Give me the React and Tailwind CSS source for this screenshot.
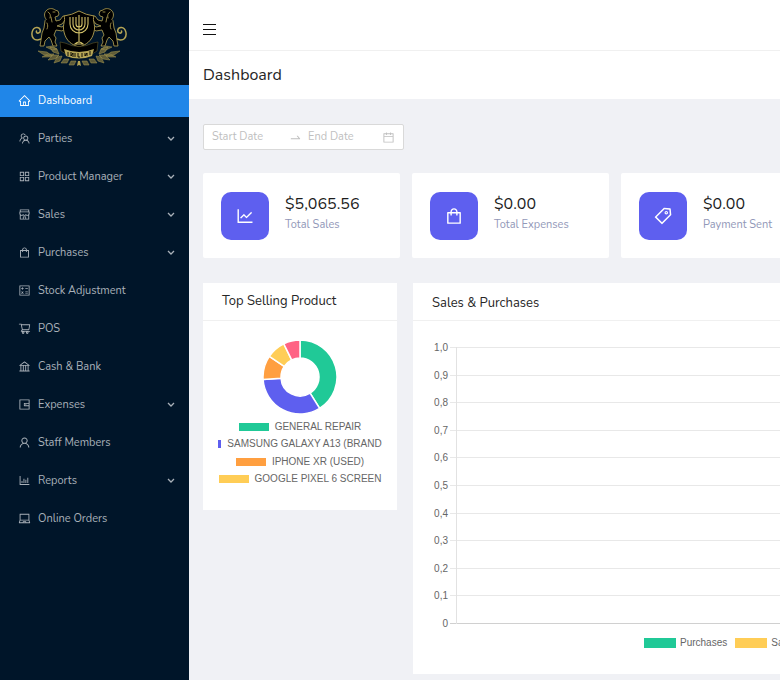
import {
  AiOutlineHome, AiOutlineTeam, AiOutlineAppstore, AiOutlineShop, AiOutlineShopping, AiOutlineCalculator,
  AiOutlineShoppingCart, AiOutlineBank, AiOutlineWallet, AiOutlineUser, AiOutlineBarChart, AiOutlineLaptop,
  AiOutlineLineChart, AiOutlineTag, AiOutlineCalendar, AiOutlineSwapRight,
} from "react-icons/ai";

const menu = [
  { label: "Dashboard", Icon: AiOutlineHome, active: true },
  { label: "Parties", Icon: AiOutlineTeam, sub: true },
  { label: "Product Manager", Icon: AiOutlineAppstore, sub: true },
  { label: "Sales", Icon: AiOutlineShop, sub: true },
  { label: "Purchases", Icon: AiOutlineShopping, sub: true },
  { label: "Stock Adjustment", Icon: AiOutlineCalculator },
  { label: "POS", Icon: AiOutlineShoppingCart },
  { label: "Cash & Bank", Icon: AiOutlineBank },
  { label: "Expenses", Icon: AiOutlineWallet, sub: true },
  { label: "Staff Members", Icon: AiOutlineUser },
  { label: "Reports", Icon: AiOutlineBarChart, sub: true },
  { label: "Online Orders", Icon: AiOutlineLaptop },
];

const stats = [
  { value: "$5,065.56", label: "Total Sales", Icon: AiOutlineLineChart },
  { value: "$0.00", label: "Total Expenses", Icon: AiOutlineShopping },
  { value: "$0.00", label: "Payment Sent", Icon: AiOutlineTag },
];

const slices = [
  { color: "#20c997", from: 0, to: 148 },
  { color: "#5e5fef", from: 148, to: 266 },
  { color: "#ff9f40", from: 266, to: 304 },
  { color: "#ffcd56", from: 304, to: 334 },
  { color: "#ff6384", from: 334, to: 360 },
];

const ticks = ["1,0", "0,9", "0,8", "0,7", "0,6", "0,5", "0,4", "0,3", "0,2", "0,1", "0"];

function Lion() {
  return (
    <g fill="#000" stroke="#b5a555" strokeWidth="0.8" strokeLinejoin="round" strokeLinecap="round">
      <path fill="none" strokeWidth="1.5" d="M13 29c-3 3-8 4-10.500 1.500C-.5 27 1 20 5.500 19.500c4-.4 5 4.500 2 5.500-1.500.5-2.500-.8-2-2" />
      <path d="M15 11c-2-2-2-6 0-8 2-3 7-3 9-1l3 1 1 3-1 2-3 1 1 4 4-1 3-4 3 0 0 3-4 5-5 2 5 1 4-3 1 3-5 4-6-1-2 5 2 3-1 4 2 4h-4l-2-6-2-3-4 4-1 5h-4l1-6 1-7 2-5 1-7z" />
      <path fill="none" d="M17 4c2 1 3 3 2 6M20 9l1 5M16 15c1 2 1 4 0 6M22 4h2" />
    </g>
  );
}

function Leaves() {
  return (
    <path
      fill="#7d733d"
      fillOpacity="0.75"
      stroke="#a99a50"
      strokeWidth="0.5"
      d="M7 43l9 1 5 4-8-1zM11 49l6-3 6 0-4 3zM19 39l7 2 2 5-6-2zM17 52l5-5 6 0-4 4zM23 55l3-6 5-1-2 5zM15 39l6-1 5 3-5 1zM30 55l3-4 5 0-2 4zM38 57l2-4 5 0-2 4z"
    />
  );
}

function Crest() {
  return (
    <svg className="h-[60px] w-24" viewBox="0 0 96 60" role="img" aria-label="Company crest">
      <Leaves />
      <g transform="matrix(-1 0 0 1 96 0)"><Leaves /></g>
      <Lion />
      <g transform="matrix(-1 0 0 1 96 0)"><Lion /></g>
      <path d="M33 8q8-1 15-5 7 4 15 5c-2 5 2 8 0 16-2 9-8 13-15 15-7-2-13-6-15-15-2-8 2-11 0-16z" fill="#000" stroke="#a3924a" />
      <g fill="none" stroke="#d3c26a" strokeWidth="1.1">
        <path d="M39 9v7a9 9 0 0 0 18 0V9M42 9v7a6 6 0 0 0 12 0V9M45 9v7a3 3 0 0 0 6 0V9M48 7v27M44 36q4-4 8 0z" />
      </g>
      <path d="M29 34l5 1q14 7 28 0l5-1-1 9-5 3q-13 5-26 0l-5-3z" fill="#000" stroke="#5f5729" strokeWidth="0.6" />
      <path d="M33 41q15 6 30 0l-2 7q-13 5-26 0z" fill="#b5a555" />
      <path d="M37 44v4M40 44v4l2-3v4M44 45v4M47 45v4h2M51 45v4M54 45v3l2-3v3M59 43v4" fill="none" stroke="#000" strokeWidth="0.9" />
      <path d="M46 58l1-5h2l1 5-2-1z" fill="#b5a555" />
    </svg>
  );
}

function Chevron() {
  return (
    <svg className="ml-auto size-2" viewBox="0 0 8 8" fill="none" stroke="currentColor" strokeWidth="1.3" aria-hidden="true">
      <path d="M1 2 4 5 7 2" />
    </svg>
  );
}

function slicePath({ from, to }) {
  const point = (deg, r) => {
    const a = ((deg - 90) * Math.PI) / 180;
    return `${37 + r * Math.cos(a)} ${37 + r * Math.sin(a)}`;
  };
  return `M${point(from, 37)}A37 37 0 0 1 ${point(to, 37)}L${point(to, 19)}A19 19 0 0 0 ${point(from, 19)}Z`;
}

function Sidebar() {
  return (
    <aside className="w-[189px] shrink-0 bg-[#001529]">
      <div className="flex h-[85px] justify-center pt-2 pr-[31px]"><Crest /></div>
      <nav aria-label="Main">
        <ul className="flex flex-col gap-1.5">
          {menu.map(({ label, Icon, active, sub }) => (
            <li key={label}>
              <button
                type="button"
                aria-current={active ? "page" : undefined}
                className={
                  active
                    ? "flex h-8 w-full items-center bg-[#2086e8] pr-3.5 pl-[18px] text-[11px] leading-4 text-white"
                    : "flex h-8 w-full items-center pr-3.5 pl-[18px] text-[11px] leading-4 text-[#a9b1b9]"
                }
              >
                <Icon className="mr-[7px] mb-px size-[13px]" aria-hidden="true" />
                {label}
                {sub && <Chevron />}
              </button>
            </li>
          ))}
        </ul>
      </nav>
    </aside>
  );
}

function DateRange() {
  return (
    <div className="flex h-[26px] w-[201px] items-center rounded-xs border border-[#d9d9d9] bg-white px-2 text-[11px] text-[#bfbfbf]">
      <input aria-label="Start Date" placeholder="Start Date" className="w-[77px] min-w-0 outline-none placeholder:text-[#bfbfbf]" />
      <AiOutlineSwapRight className="mr-1.5 size-[13px] shrink-0" aria-hidden="true" />
      <input aria-label="End Date" placeholder="End Date" className="min-w-0 flex-1 outline-none placeholder:text-[#bfbfbf]" />
      <AiOutlineCalendar className="size-[13px] shrink-0" aria-hidden="true" />
    </div>
  );
}

function LegendRow({ swatch, children }) {
  return (
    <li className="flex items-center justify-center gap-1.5 whitespace-nowrap">
      <span className={swatch} />
      <span>{children}</span>
    </li>
  );
}

function SalesChart() {
  return (
    <svg className="block h-[296px] w-full" role="img" aria-label="Sales and purchases by value">
      {ticks.map((t, i) => {
        const y = 10 + Math.round(i * 27.6);
        return (
          <g key={t}>
            <text x="16" y={y + 4} textAnchor="end" fill="#666" fontSize="10">{t}</text>
            <rect x="18" y={y} width="100%" height="1" fill={t === "0" ? "#d0d0d0" : "#e8e8e8"} />
          </g>
        );
      })}
      <rect x="24" y="10" width="1" height="277" fill="#e2e2e2" />
    </svg>
  );
}

export default function App() {
  return (
    <div className="flex min-h-screen overflow-hidden bg-[#f0f1f5] font-[Nunito,Lato,sans-serif] text-[#262626]">
      <Sidebar />
      <main className="min-w-0 flex-1 overflow-hidden">
        <header className="flex h-[51px] items-center border-b border-[#f0f0f0] bg-white px-3.5 pt-2">
          <button type="button" aria-label="Toggle menu" className="flex w-[13px] flex-col gap-1">
            <span className="h-px bg-[#111]" />
            <span className="h-px bg-[#111]" />
            <span className="h-px bg-[#111]" />
          </button>
        </header>
        <div className="flex h-12 items-center bg-white px-3.5">
          <h1 className="text-[16px]">Dashboard</h1>
        </div>
        <div className="pt-[25px] pl-3.5">
          <DateRange />
          <section aria-label="Totals" className="mt-[23px] flex gap-3">
            {stats.map(({ value, label, Icon }) => (
              <article key={label} className="flex h-[85px] w-[197px] shrink-0 items-center gap-4 rounded-xs bg-white px-[18px]">
                <span className="grid size-12 shrink-0 place-items-center rounded-[10px] bg-[#5e5fef] text-white">
                  <Icon className="size-5" aria-hidden="true" />
                </span>
                <div className="pb-0.5 whitespace-nowrap">
                  <p className="text-[16px] leading-5 text-[#1c1c1c]">{value}</p>
                  <p className="text-[11px] leading-[22px] text-[#9298b8]">{label}</p>
                </div>
              </article>
            ))}
          </section>
          <div className="mt-[25px] flex items-start gap-4">
            <section className="w-[194px] shrink-0 bg-white">
              <h2 className="h-[38px] border-b border-[#f0f0f0] px-[19px] text-[13px] leading-9">Top Selling Product</h2>
              <div className="flex h-[189px] flex-col items-center px-1 pt-[19px]">
                <svg className="size-[74px] shrink-0" viewBox="0 0 74 74" role="img" aria-label="Top selling products">
                  {slices.map((s) => (
                    <path key={s.color} d={slicePath(s)} fill={s.color} stroke="#fff" strokeWidth="1.5" />
                  ))}
                </svg>
                <ul className="mt-1 flex h-[70px] w-full flex-col justify-around font-[Liberation_Sans,Arial,sans-serif] text-[10px] leading-4 text-[#666]">
                  <LegendRow swatch="h-2 w-[30px] bg-[#20c997]">GENERAL REPAIR</LegendRow>
                  <LegendRow swatch="h-2 w-[3px] bg-[#5e5fef]">SAMSUNG GALAXY A13 (BRAND</LegendRow>
                  <LegendRow swatch="h-2 w-[30px] bg-[#ff9f40]">IPHONE XR (USED)</LegendRow>
                  <LegendRow swatch="h-2 w-[30px] bg-[#ffcd56]">GOOGLE PIXEL 6 SCREEN</LegendRow>
                </ul>
              </div>
            </section>
            <section className="min-w-0 flex-1 bg-white">
              <h2 className="h-[38px] border-b border-[#f0f0f0] px-[19px] text-[13px] leading-10">Sales &amp; Purchases</h2>
              <div className="h-[353px] pt-4 pl-[19px] font-[Liberation_Sans,Arial,sans-serif] text-[10px] text-[#666]">
                <SalesChart />
                <ul className="flex gap-2 pl-[212px] leading-5 whitespace-nowrap">
                  <li className="flex items-center gap-1">
                    <span className="h-[10px] w-8 bg-[#20c997]" />
                    Purchases
                  </li>
                  <li className="flex items-center gap-1">
                    <span className="h-[10px] w-8 bg-[#ffcd56]" />
                    Sales
                  </li>
                </ul>
              </div>
            </section>
          </div>
        </div>
      </main>
    </div>
  );
}
